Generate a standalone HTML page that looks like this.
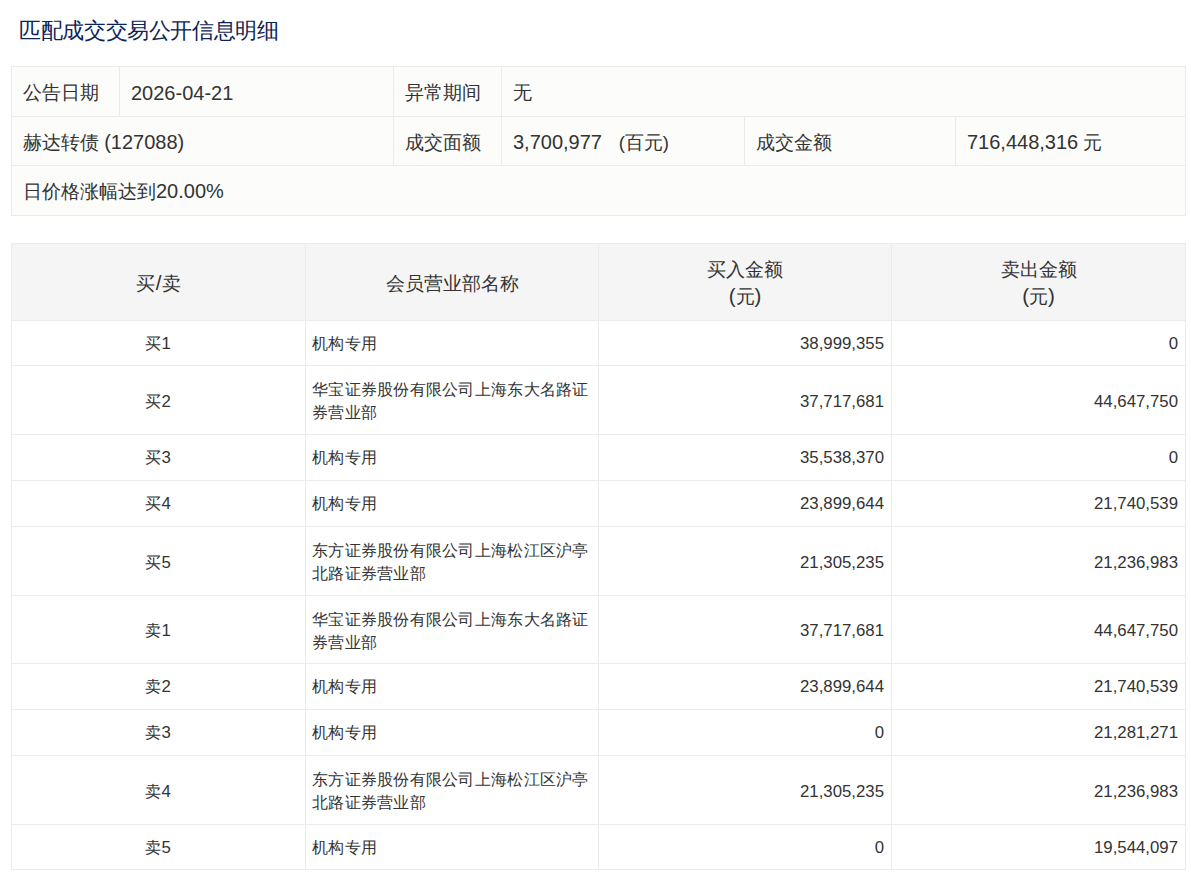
<!DOCTYPE html>
<html><head><meta charset="utf-8">
<style>
*{box-sizing:border-box;}
html,body{margin:0;padding:0;background:#fff;}
body{font-family:"Liberation Sans",sans-serif;color:#333;width:1191px;height:879px;overflow:hidden;position:relative;}
.title{position:absolute;left:19px;top:16px;font-size:22px;letter-spacing:-0.36px;line-height:30px;color:#0e2456;white-space:nowrap;}
table{border-collapse:separate;border-spacing:0;table-layout:fixed;position:absolute;}
td,th{padding:0;font-weight:normal;}
.info{left:11px;top:66px;width:1175px;background:#fcfcfa;border-top:1px solid #ebebeb;border-left:1px solid #ebebeb;font-size:18.67px;}
.info td{border-right:1px solid #ebebeb;border-bottom:1px solid #ebebeb;padding:4px 0 0 11px;white-space:nowrap;line-height:26.67px;}
.info .n{font-size:20px;}
.main{left:11px;top:243px;width:1175px;border-top:1px solid #ebebeb;border-left:1px solid #ebebeb;}
.main td,.main th{border-right:1px solid #ebebeb;border-bottom:1px solid #ebebeb;}
.main th .p{font-size:20.5px;line-height:0;}
.main th{background:#f5f5f5;font-size:18.67px;line-height:26.67px;text-align:center;padding-top:4px;}
.main td{font-size:16px;line-height:22.86px;padding:2px 7px 0 6px;letter-spacing:0.27px;}
.main tr.d td{padding-top:4px;}
.main td.c{text-align:center;}
.main td.r{text-align:right;}
.main .n{font-size:16.8px;letter-spacing:0;}
</style></head><body>
<div class="title">匹配成交交易公开信息明细</div>
<table class="info">
<colgroup><col style="width:108px"><col style="width:274px"><col style="width:108px"><col style="width:243px"><col style="width:211px"><col style="width:230px"></colgroup>
<tr style="height:50px"><td>公告日期</td><td><span class="n">2026-04-21</span></td><td>异常期间</td><td colspan="3">无</td></tr>
<tr style="height:49px"><td colspan="2">赫达转债 <span class="n">(127088)</span></td><td>成交面额</td><td><span class="n">3,700,977&nbsp;&nbsp;&nbsp;</span>(百元)</td><td>成交金额</td><td><span class="n">716,448,316</span> 元</td></tr>
<tr style="height:50px"><td colspan="6" style="padding-top:2px">日价格涨幅达到<span class="n">20.00%</span></td></tr>
</table>
<table class="main">
<colgroup><col style="width:294px"><col style="width:293px"><col style="width:293px"><col style="width:294px"></colgroup>
<tr style="height:77px"><th>买<span class="p" style="margin:0 1px">/</span>卖</th><th>会员营业部名称</th><th>买入金额<br><span class="p">(</span>元<span class="p">)</span></th><th>卖出金额<br><span class="p">(</span>元<span class="p">)</span></th></tr>
<tr style="height:45px"><td class="c">买<span class="n">1</span></td><td>机构专用</td><td class="r"><span class="n">38,999,355</span></td><td class="r"><span class="n">0</span></td></tr>
<tr class="d" style="height:69px"><td class="c">买<span class="n">2</span></td><td>华宝证券股份有限公司上海东大名路证券营业部</td><td class="r"><span class="n">37,717,681</span></td><td class="r"><span class="n">44,647,750</span></td></tr>
<tr style="height:46px"><td class="c">买<span class="n">3</span></td><td>机构专用</td><td class="r"><span class="n">35,538,370</span></td><td class="r"><span class="n">0</span></td></tr>
<tr style="height:46px"><td class="c">买<span class="n">4</span></td><td>机构专用</td><td class="r"><span class="n">23,899,644</span></td><td class="r"><span class="n">21,740,539</span></td></tr>
<tr class="d" style="height:69px"><td class="c">买<span class="n">5</span></td><td>东方证券股份有限公司上海松江区沪亭北路证券营业部</td><td class="r"><span class="n">21,305,235</span></td><td class="r"><span class="n">21,236,983</span></td></tr>
<tr class="d" style="height:68px"><td class="c">卖<span class="n">1</span></td><td>华宝证券股份有限公司上海东大名路证券营业部</td><td class="r"><span class="n">37,717,681</span></td><td class="r"><span class="n">44,647,750</span></td></tr>
<tr style="height:46px"><td class="c">卖<span class="n">2</span></td><td>机构专用</td><td class="r"><span class="n">23,899,644</span></td><td class="r"><span class="n">21,740,539</span></td></tr>
<tr style="height:46px"><td class="c">卖<span class="n">3</span></td><td>机构专用</td><td class="r"><span class="n">0</span></td><td class="r"><span class="n">21,281,271</span></td></tr>
<tr class="d" style="height:69px"><td class="c">卖<span class="n">4</span></td><td>东方证券股份有限公司上海松江区沪亭北路证券营业部</td><td class="r"><span class="n">21,305,235</span></td><td class="r"><span class="n">21,236,983</span></td></tr>
<tr style="height:45px"><td class="c">卖<span class="n">5</span></td><td>机构专用</td><td class="r"><span class="n">0</span></td><td class="r"><span class="n">19,544,097</span></td></tr>
</table>
</body></html>
